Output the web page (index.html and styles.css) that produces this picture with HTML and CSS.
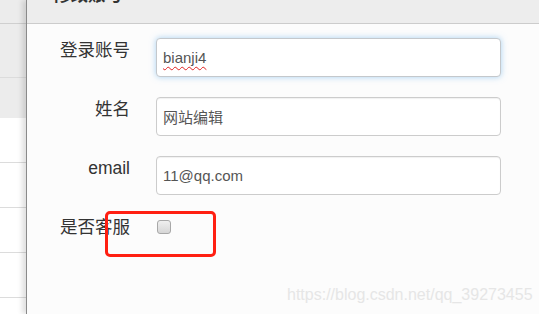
FILE: index.html
```html
<!DOCTYPE html>
<html lang="zh">
<head>
<meta charset="utf-8">
<link rel="stylesheet" href="styles.css">
</head>
<body>
<div class="page">
  <div class="backdrop">
    <div class="bd-row bd-head"></div>
    <div class="bd-row bd-gray tall"></div>
    <div class="bd-row bd-gray mid"></div>
    <div class="bd-row"></div>
    <div class="bd-row"></div>
    <div class="bd-row"></div>
    <div class="bd-row"></div>
  </div>
  <div class="modal">
    <div class="modal-header"><h4 class="title">修改账号</h4></div>
    <div class="modal-body">
      <div class="form-row">
        <label class="lbl">登录账号</label>
        <div class="field focused"><span class="spell">bianji4</span></div>
      </div>
      <div class="form-row">
        <label class="lbl">姓名</label>
        <div class="field">网站编辑</div>
      </div>
      <div class="form-row">
        <label class="lbl">email</label>
        <div class="field">11@qq.com</div>
      </div>
      <div class="form-row check-row">
        <label class="lbl">是否客服</label>
        <span class="checkbox"></span>
      </div>
    </div>
  </div>
</div>
<div class="annot"></div>
<div class="watermark">https://blog.csdn.net/qq_39273455</div>
</body>
</html>
```
FILE: styles.css
```css
html, body {
  margin: 0;
  padding: 0;
  width: 539px;
  height: 314px;
  overflow: hidden;
  background: #fff;
  font-family: "Liberation Sans", "Noto Sans CJK SC", sans-serif;
}
.page {
  display: flex;
  height: 314px;
}
.backdrop {
  width: 26px;
  flex: none;
  display: flex;
  flex-direction: column;
  background: #fff;
}
.bd-row {
  height: 44px;
  border-bottom: 1px solid #dcdcdc;
  flex: none;
}
.bd-head {
  height: 23px;
  background: #ececec;
  border-bottom: 1px solid #cfcfcf;
}
.bd-gray { background: #ececec; }
.bd-row.tall { height: 53px; }
.bd-row.mid { height: 40px; border-bottom: none; }
.modal {
  flex: 1;
  border-left: 1px solid #8a8a8a;
  box-shadow: -4px 0 5px rgba(0,0,0,0.12);
  background: #fcfcfc;
  display: flex;
  flex-direction: column;
}
.modal-header {
  height: 23px;
  background: #ededed;
  border-bottom: 1px solid #cccccc;
  overflow: hidden;
  padding-left: 26px;
}
.title {
  margin: -17px 0 0 0;
  font-size: 17.5px;
  line-height: 24px;
  font-weight: bold;
  color: #333;
}
.modal-body {
  padding-top: 14px;
  display: flex;
  flex-direction: column;
  gap: 20px;
}
.form-row {
  display: grid;
  grid-template-columns: 103px 345px;
  column-gap: 26px;
  align-items: start;
}
.lbl {
  text-align: right;
  font-size: 17.5px;
  line-height: 24px;
  color: #333;
}
.field {
  box-sizing: border-box;
  height: 39px;
  width: 345px;
  display: flex;
  align-items: center;
  padding: 0 6px;
  border: 1px solid #cccccc;
  border-radius: 4px;
  background: #fff;
  font-size: 15px;
  color: #555;
  box-shadow: inset 0 1px 1px rgba(0,0,0,0.06);
  white-space: nowrap;
}
.field.focused {
  border-color: #c4c8cc;
  box-shadow: 0 0 6px rgba(102,175,233,0.55);
}
.spell {
  text-decoration: underline wavy #e02020;
  text-decoration-thickness: 1px;
  text-underline-offset: 3px;
}
.check-row {
  align-items: center;
}
.checkbox {
  display: block;
  width: 14px;
  height: 14px;
  box-sizing: border-box;
  border: 1px solid #a8a8a8;
  border-radius: 3px;
  background: linear-gradient(#efefef, #d6d6d6);
  margin-left: 1px;
}
.annot {
  position: absolute;
  left: 105px;
  top: 211px;
  width: 105px;
  height: 40px;
  border: 3px solid #ff1f12;
  border-radius: 5px;
}
.watermark {
  position: absolute;
  left: 287px;
  top: 285px;
  font-family: "Liberation Sans", sans-serif;
  font-size: 16px;
  line-height: 20px;
  color: #e6e6e6;
  white-space: nowrap;
}
```
